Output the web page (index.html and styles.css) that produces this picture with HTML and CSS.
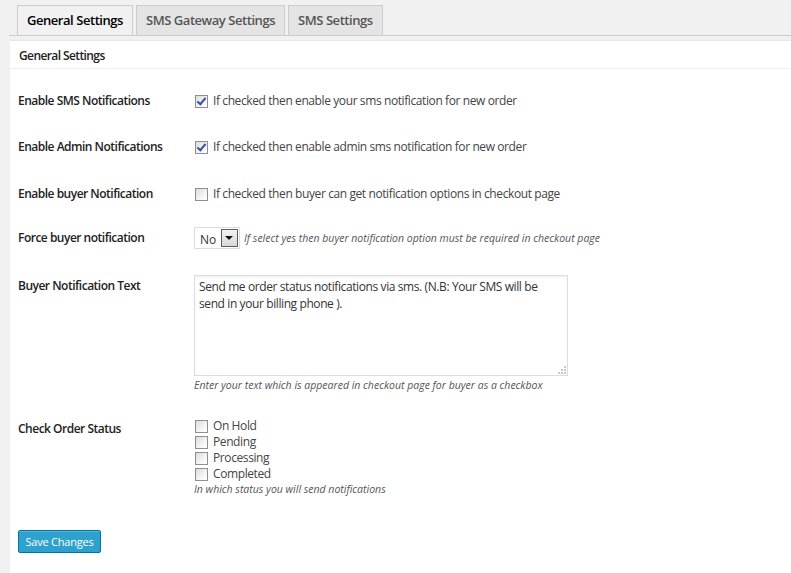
FILE: index.html
```html
<!DOCTYPE html>
<html>
<head>
<meta charset="utf-8">
<link rel="stylesheet" href="styles.css">
</head>
<body>
<div class="wrap">
  <nav class="tabs">
    <a class="tab tab-active">General Settings</a>
    <a class="tab">SMS Gateway Settings</a>
    <a class="tab">SMS Settings</a>
  </nav>
  <div class="panel">
    <div class="panel-head">General Settings</div>
    <form class="form">
      <div class="row row-check">
        <div class="label">Enable SMS Notifications</div>
        <label class="field"><input type="checkbox" class="cb" checked><span>If checked then enable your sms notification for new order</span></label>
      </div>
      <div class="row row-check">
        <div class="label">Enable Admin Notifications</div>
        <label class="field"><input type="checkbox" class="cb" checked><span>If checked then enable admin sms notification for new order</span></label>
      </div>
      <div class="row row-check">
        <div class="label">Enable buyer Notification</div>
        <label class="field"><input type="checkbox" class="cb"><span>If checked then buyer can get notification options in checkout page</span></label>
      </div>
      <div class="row row-select">
        <div class="label">Force buyer notification</div>
        <div class="field">
          <span class="select"><select><option>No</option><option>Yes</option></select></span>
          <span class="desc">If select yes then buyer notification option must be required in checkout page</span>
        </div>
      </div>
      <div class="row row-text">
        <div class="label label-top">Buyer Notification Text</div>
        <div class="field-col">
          <div class="ta-wrap">
            <textarea class="ta">Send me order status notifications via sms. (N.B: Your SMS will be send in your billing phone ).</textarea>
            <svg class="grip" width="10" height="10" viewBox="0 0 10 10"><g fill="#c8c8c8"><rect x="7" y="1" width="2" height="2"/><rect x="4" y="4" width="2" height="2"/><rect x="7" y="4" width="2" height="2"/><rect x="1" y="7" width="2" height="2"/><rect x="4" y="7" width="2" height="2"/><rect x="7" y="7" width="2" height="2"/></g></svg>
          </div>
          <span class="desc">Enter your text which is appeared in checkout page for buyer as a checkbox</span>
        </div>
      </div>
      <div class="row row-status">
        <div class="label label-top">Check Order Status</div>
        <div class="field-col">
          <label class="opt"><input type="checkbox" class="cb"><span>On Hold</span></label>
          <label class="opt"><input type="checkbox" class="cb"><span>Pending</span></label>
          <label class="opt"><input type="checkbox" class="cb"><span>Processing</span></label>
          <label class="opt"><input type="checkbox" class="cb"><span>Completed</span></label>
          <span class="desc">In which status you will send notifications</span>
        </div>
      </div>
      <div class="actions">
        <button type="button" class="btn">Save Changes</button>
      </div>
    </form>
  </div>
</div>
</body>
</html>
```

FILE: styles.css
```css
html, body {
  margin: 0;
  padding: 0;
  height: 100%;
}
body {
  background: #f1f1f1;
  font-family: "Open Sans", "Liberation Sans", sans-serif;
  color: #222;
  overflow: hidden;
}
.wrap {
  padding-top: 5px;
  padding-left: 9px;
}
.tabs {
  display: flex;
  gap: 3px;
  padding-left: 8px;
  border-bottom: 1px solid #ccc;
  height: 30px;
}
.tab {
  box-sizing: border-box;
  height: 30px;
  border: 1px solid #ccc;
  border-bottom: none;
  background: #e4e4e4;
  color: #555;
  font-size: 13px;
  font-weight: 600;
  letter-spacing: -0.45px;
  line-height: 28px;
  padding: 0 9px;
}
.tab-active {
  background: #f1f1f1;
  color: #000;
}
.panel {
  margin-top: 5px;
  margin-left: 1px;
  background: #fff;
  box-shadow: 0 -1px 1px rgba(0,0,0,0.04);
  height: 560px;
}
.panel-head {
  height: 28px;
  box-sizing: border-box;
  padding: 7px 9px 0;
  font-size: 12px;
  font-weight: 600;
  letter-spacing: -0.6px;
  line-height: 16px;
  border-bottom: 1px solid #eee;
}
.form {
  padding: 9px 0 0 8px;
}
.row {
  display: grid;
  grid-template-columns: 176px 1fr;
  align-items: center;
  padding: 15px 0;
}
.label {
  font-size: 12px;
  font-weight: 600;
  letter-spacing: -0.5px;
  line-height: 16px;
  color: #222;
}
.label-top {
  align-self: start;
}
.field {
  display: flex;
  align-items: center;
  font-size: 12px;
  letter-spacing: -0.4px;
  line-height: 16px;
  color: #444;
}
.cb {
  appearance: none;
  -webkit-appearance: none;
  box-sizing: border-box;
  width: 13px;
  height: 13px;
  margin: 0 5px 0 1px;
  border: 1px solid #8e8f8f;
  background: linear-gradient(135deg, #dcdcdc 0%, #f4f4f4 60%, #fff 100%);
  position: relative;
  flex: none;
}
.cb:checked::before {
  content: "";
  position: absolute;
  left: 3px;
  top: 0px;
  width: 3px;
  height: 7px;
  border-right: 2px solid #34529f;
  border-bottom: 2px solid #34529f;
  transform: rotate(40deg);
}
.row-check:nth-child(3) {
  padding: 16px 0 15px;
}
.row-select {
  padding: 10px 0 26px;
}
.select {
  position: relative;
  display: inline-block;
  width: 46px;
  height: 22px;
  margin-right: 4px;
}
.select select {
  appearance: none;
  -webkit-appearance: none;
  box-sizing: border-box;
  width: 46px;
  height: 22px;
  border: 1px solid #ddd;
  background: #fff;
  font-family: "Open Sans", "Liberation Sans", sans-serif;
  font-size: 12px;
  color: #333;
  padding: 2px 5px 0;
  border-radius: 0;
}
.select::after {
  content: "";
  position: absolute;
  right: 2px;
  top: 2px;
  box-sizing: border-box;
  width: 17px;
  height: 18px;
  border: 1px solid #5e5e5e;
  background: linear-gradient(#f3f3f3, #d8d8d8);
  pointer-events: none;
}
.select::before {
  content: "";
  position: absolute;
  right: 7px;
  top: 9px;
  width: 0;
  height: 0;
  border-left: 4px solid transparent;
  border-right: 4px solid transparent;
  border-top: 4px solid #111;
  z-index: 1;
  pointer-events: none;
}
.desc {
  font-size: 10.5px;
  font-style: italic;
  letter-spacing: 0;
  color: #555;
  line-height: 14px;
}
.row-text {
  padding: 0;
}
.field-col {
  display: flex;
  flex-direction: column;
  align-items: flex-start;
}
.ta-wrap {
  position: relative;
  line-height: 0;
}
.ta {
  box-sizing: border-box;
  width: 374px;
  height: 101px;
  border: 1px solid #ddd;
  box-shadow: inset 0 1px 2px rgba(0,0,0,0.07);
  font-family: "Open Sans", "Liberation Sans", sans-serif;
  font-size: 12px;
  letter-spacing: -0.4px;
  line-height: 17px;
  color: #333;
  padding: 2px 4px;
  margin: 0;
  resize: none;
  outline: none;
  overflow: hidden;
}
.grip {
  position: absolute;
  right: 1px;
  bottom: 1px;
}
.row-text .desc {
  margin-top: 2px;
}
.row-text .label-top {
  margin-top: 3px;
}
.row-status {
  padding: 26px 0 0;
}
.row-status .label-top {
  margin-top: 3px;
}
.opt {
  display: flex;
  align-items: center;
  font-size: 12px;
  letter-spacing: -0.4px;
  line-height: 16px;
  color: #444;
}
.row-status .desc {
  margin-top: 0;
}
.actions {
  padding-top: 33px;
}
.btn {
  box-sizing: border-box;
  height: 23px;
  width: 83px;
  padding: 0;
  background: #2ea2cc;
  border: 1px solid #0074a2;
  border-radius: 2px;
  box-shadow: inset 0 1px 0 rgba(120,200,230,0.5);
  color: #fff;
  font-family: "Open Sans", "Liberation Sans", sans-serif;
  font-size: 11px;
  letter-spacing: -0.2px;
  line-height: 19px;
}
```
